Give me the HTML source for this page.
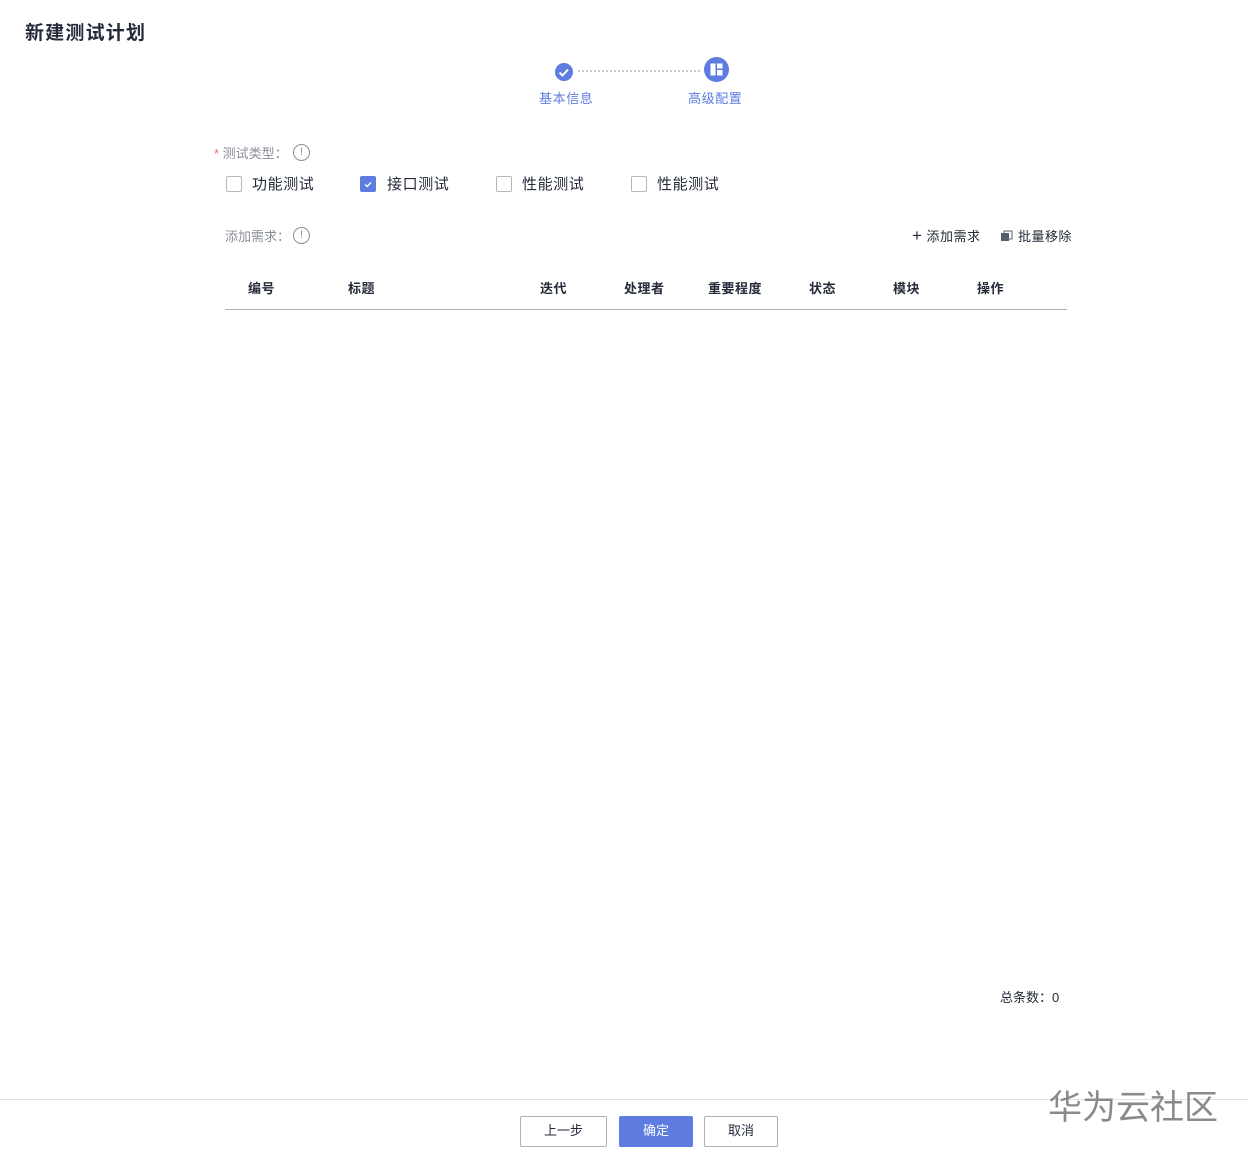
<!DOCTYPE html>
<html><head><meta charset="utf-8"><style>
body{margin:0;width:1248px;height:1158px;background:#fff;position:relative;font-family:"Liberation Sans","Noto Sans CJK SC",sans-serif;overflow:hidden}
.a{position:absolute;white-space:nowrap}
.cb{position:absolute;width:16px;height:16px;border:1px solid #b8b8b8;border-radius:2px;box-sizing:border-box;background:#fff}
.th{position:absolute;top:278px;font-size:13px;font-weight:bold;color:#252b3a;letter-spacing:0.5px}
.btn{position:absolute;top:1116px;height:31px;box-sizing:border-box;border:1px solid #adb0b8;font-size:13px;color:#252b3a;text-align:center;line-height:28px;border-radius:2px}
.info{position:absolute;width:17px;height:17px;border:1px solid #8a8e99;border-radius:50%;box-sizing:border-box;font-size:11px;color:#8a8e99;text-align:center;line-height:15px}
.cbt{position:absolute;top:173px;font-size:15px;color:#252b3a;letter-spacing:0.6px}
</style></head><body>
<div class="a" style="left:25px;top:18px;font-size:19px;font-weight:bold;color:#252b3a;letter-spacing:1.2px">新建测试计划</div>
<svg class="a" style="left:554px;top:62px" width="20" height="20"><circle cx="10" cy="10" r="9" fill="#5e7ce0"/><path d="M5.5 10.5l3 3 5.5-6" stroke="#fff" stroke-width="2" fill="none"/></svg>
<div class="a" style="left:578px;top:70px;width:122px;border-top:2px dotted #c4c8d2"></div>
<svg class="a" style="left:704px;top:57px" width="25" height="25"><circle cx="12.5" cy="12.5" r="12.5" fill="#5e7ce0"/><rect x="6.5" y="6.5" width="5" height="12" fill="#fff"/><rect x="13" y="6.5" width="5.5" height="5" fill="#fff"/><rect x="13" y="13" width="5.5" height="5.5" fill="#fff"/></svg>
<div class="a" style="left:539px;top:88px;font-size:13px;color:#5e7ce0;letter-spacing:0.6px">基本信息</div>
<div class="a" style="left:688px;top:88px;font-size:13px;color:#5e7ce0;letter-spacing:0.6px">高级配置</div>
<div class="a" style="left:214px;top:143px;font-size:13px;color:#8a8e99"><span style="color:#f66f6a">*</span> 测试类型：</div>
<div class="info" style="left:293px;top:144px">!</div>
<div class="cb" style="left:226px;top:176px"></div><div class="cbt" style="left:252px">功能测试</div>
<div class="cb" style="left:360px;top:176px;background:#5e7ce0;border-color:#5e7ce0"><svg width="14" height="14" style="position:absolute;left:0;top:0"><path d="M4 7.5l2.2 2L10 5.5" stroke="#fff" stroke-width="1.4" fill="none"/></svg></div><div class="cbt" style="left:387px">接口测试</div>
<div class="cb" style="left:496px;top:176px"></div><div class="cbt" style="left:522px">性能测试</div>
<div class="cb" style="left:631px;top:176px"></div><div class="cbt" style="left:657px">性能测试</div>
<div class="a" style="left:225px;top:226px;font-size:13px;color:#8a8e99">添加需求：</div>
<div class="info" style="left:293px;top:227px">!</div>
<div class="a" style="left:912px;top:226px;font-size:13px;color:#252b3a;letter-spacing:0.5px"><span style="font-size:17px;line-height:13px">+</span> 添加需求</div>
<svg class="a" style="left:1000px;top:230px" width="13" height="12"><rect x="1" y="3" width="8" height="8" fill="#575d6c"/><rect x="4" y="1" width="8" height="8" fill="none" stroke="#575d6c"/></svg>
<div class="a" style="left:1018px;top:226px;font-size:13px;color:#252b3a;letter-spacing:0.5px">批量移除</div>
<div class="th" style="left:248px">编号</div>
<div class="th" style="left:348px">标题</div>
<div class="th" style="left:540px">迭代</div>
<div class="th" style="left:624px">处理者</div>
<div class="th" style="left:708px">重要程度</div>
<div class="th" style="left:809px">状态</div>
<div class="th" style="left:893px">模块</div>
<div class="th" style="left:977px">操作</div>
<div class="a" style="left:225px;top:309px;width:842px;border-top:1px solid #adb0b8"></div>
<div class="a" style="left:1000px;top:987px;font-size:13px;color:#252b3a">总条数：0</div>
<div class="a" style="left:0;top:1099px;width:1248px;border-top:1px solid #dfe1e6"></div>
<div class="a" style="left:1048px;top:1080px;font-size:34px;color:#8a8a8a">华为云社区</div>
<div class="btn" style="left:520px;width:87px">上一步</div>
<div class="btn" style="left:619px;width:74px;background:#5e7ce0;border-color:#5e7ce0;color:#fff">确定</div>
<div class="btn" style="left:704px;width:74px">取消</div>
</body></html>
